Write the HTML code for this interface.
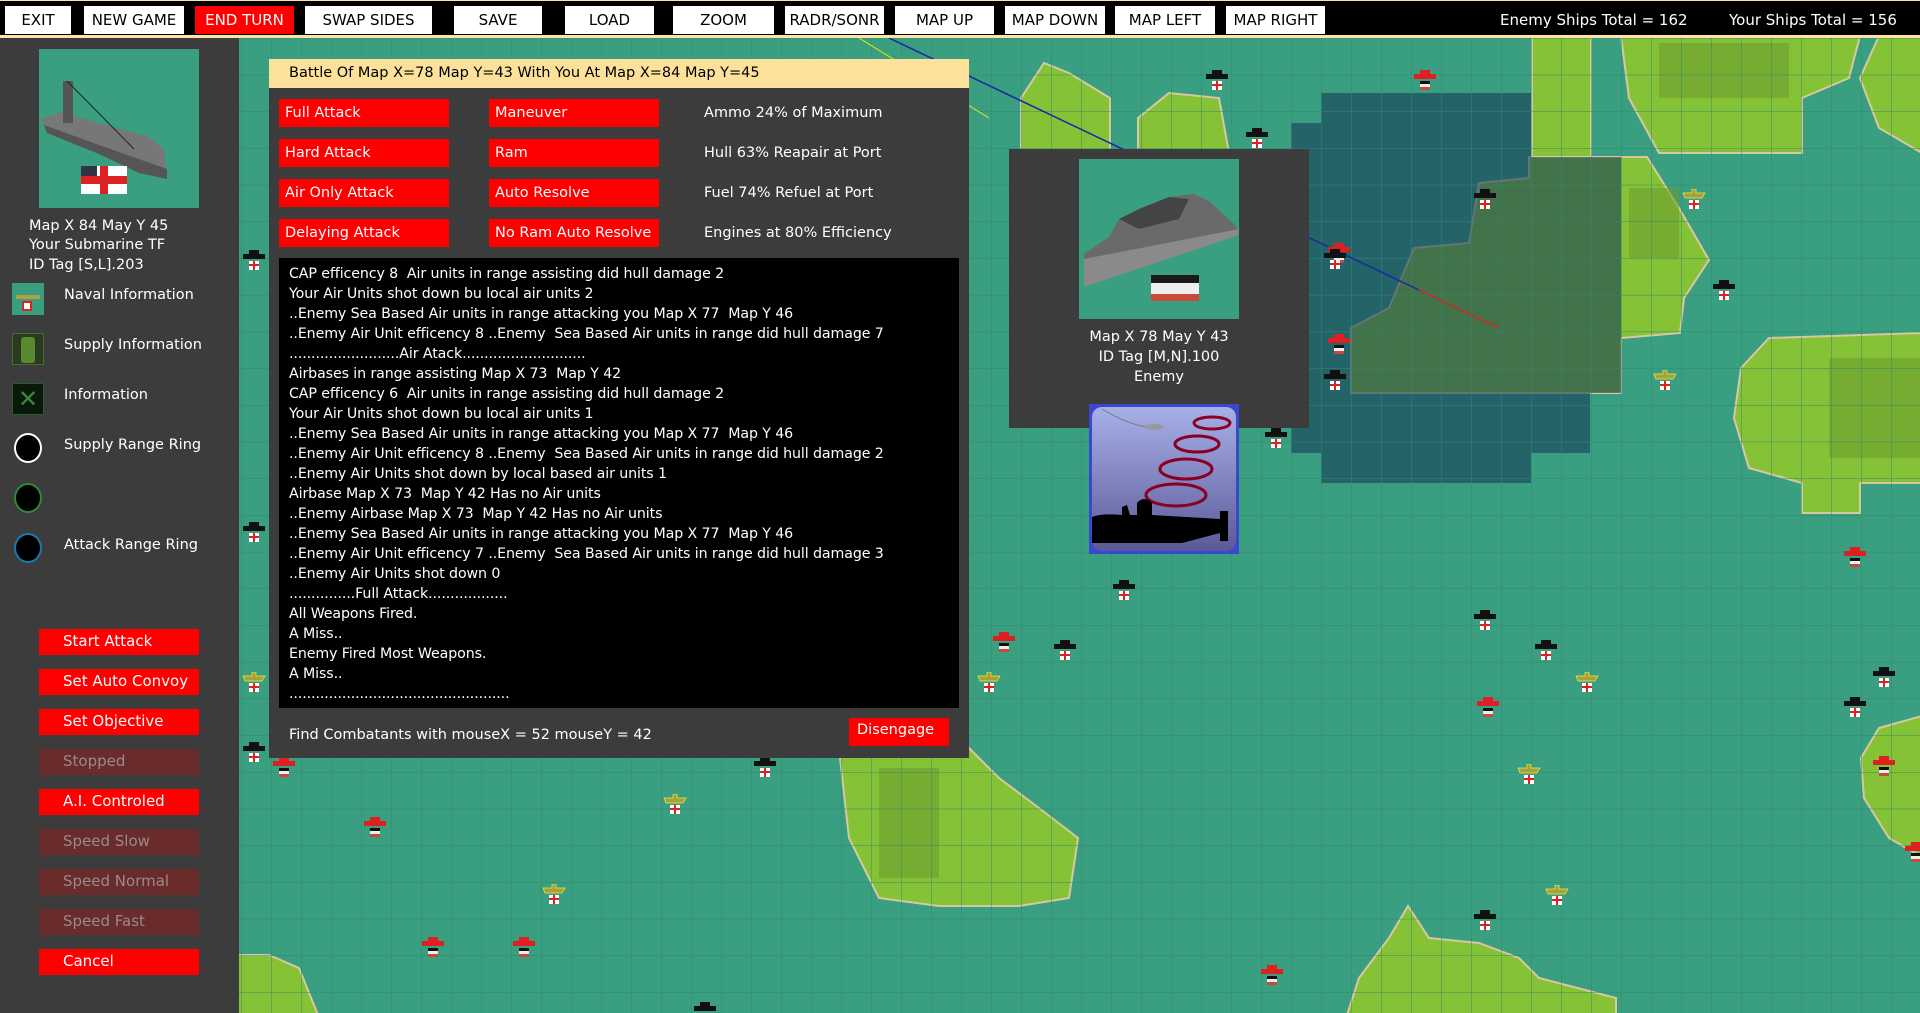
<!DOCTYPE html>
<html><head><meta charset="utf-8">
<style>
*{margin:0;padding:0;box-sizing:border-box}
body{width:1920px;height:1013px;overflow:hidden;position:relative;background:#3a9e80;font-family:"DejaVu Sans","Liberation Sans",sans-serif;color:#fff}
.a{position:absolute}
#top{left:0;top:0;width:1920px;height:38px;background:#000;border-bottom:3px solid #fde4a0;border-top:1px solid #fde4a0}
.tb{position:absolute;top:5px;height:28px;background:#fff;color:#000;font-size:15px;text-align:center;line-height:28px}
#left{left:0;top:38px;width:239px;height:975px;background:#3c3c3c}
.lt{position:absolute;font-size:14.5px;color:#fff}
.rb{position:absolute;left:39px;width:160px;height:26px;background:#f00;font-size:15px;line-height:24px;padding-left:24px}
.rb.d{background:#6a2b2b;color:#9a8a8a}
#dlg{left:269px;top:59px;width:700px;height:699px;background:#3c3c3c}
#hdr{left:0;top:0;width:700px;height:29px;background:#fde09a;color:#000;font-size:14.5px;line-height:29px;padding-left:20px}
.db{position:absolute;width:170px;height:28px;background:#f00;font-size:14.5px;line-height:28px;padding-left:6px}
.st{position:absolute;left:435px;font-size:14.5px;line-height:28px}
#log{left:10px;top:199px;width:680px;height:450px;background:#000;padding:6px 0 0 10px;font-size:14.2px;line-height:20px;white-space:pre;letter-spacing:-0.1px}
</style></head><body>
<svg class="a" style="left:239px;top:38px" width="1681" height="975">
<defs>
<pattern id="g" width="30" height="36.7" patternUnits="userSpaceOnUse" x="2" y="0"><path d="M0 0H30M0 0V36.7" stroke="#2f8a6e" stroke-width="1" fill="none"/></pattern>
<symbol id="sr" width="24" height="22"><rect x="7" y="0" width="10" height="4" fill="#e02020"/><rect x="1" y="4" width="22" height="5" fill="#e02020"/><rect x="7" y="11" width="10" height="3" fill="#111"/><rect x="7" y="14" width="10" height="3" fill="#eee"/><rect x="7" y="17" width="10" height="3" fill="#c84a3a"/></symbol>
<symbol id="sb" width="24" height="22"><rect x="7" y="0" width="10" height="4" fill="#111"/><rect x="1" y="4" width="22" height="5" fill="#111"/><rect x="7" y="11" width="10" height="9" fill="#fff"/><rect x="11" y="11" width="2" height="9" fill="#d22"/><rect x="7" y="14" width="10" height="2" fill="#d22"/></symbol>
<symbol id="sy" width="24" height="22"><path d="M10 0L14 0 14 4 23 4 20 9 3 9 1 4 10 4Z" fill="#a8a040" stroke="#ee3" stroke-width=".7"/><rect x="7" y="11" width="10" height="9" fill="#fff"/><rect x="11" y="11" width="2" height="9" fill="#d22"/><rect x="7" y="14" width="10" height="2" fill="#d22"/></symbol>
</defs>
<rect width="1681" height="975" fill="#3a9e80"/>
<!-- islands -->
<g fill="#86c236" stroke="#d8c8a0" stroke-width="2">
<path d="M1112 355L1112 290 1150 270 1175 210 1230 205 1240 145 1290 140 1290 119 1408 119 1440 170 1470 222 1445 260 1441 295 1382 300 1382 355Z"/>
<path d="M1293 -2H1352V119H1293Z"/>
<path d="M1382 -2L1621 -2 1610 40 1563 60 1563 115 1420 115 1390 60Z"/>
<path d="M1640 -2L1683 -2 1683 115 1640 90 1621 40Z"/>
<path d="M1502 330L1530 300 1683 295 1683 445 1621 445 1621 475 1563 475 1563 445 1510 430 1495 380Z"/>
<path d="M782 60L805 25 830 35 871 60 871 115 782 115Z"/>
<path d="M899 80L930 55 980 60 990 115 899 115Z"/>
<path d="M640 660L690 660 720 700 760 740 800 770 839 800 830 860 780 868 700 868 640 860 610 800 601 720Z"/>
<path d="M1108 977L1120 940 1150 900 1169 868 1190 900 1240 905 1280 920 1300 940 1377 960 1377 977Z"/>
<path d="M-2 917L30 917 60 930 79 977 -2 977Z"/>
<path d="M1640 690L1683 678 1683 819 1650 800 1625 760 1622 720Z"/>
</g>
<g fill="#6a9a30" opacity=".55">
<path d="M1420 5H1550V60H1420Z"/><path d="M1590 320H1681V420H1590Z"/><path d="M640 730H700V840H640Z"/><path d="M1390 150H1440V220H1390Z"/>
</g>
<!-- dark range overlay -->
<path d="M1082 55H1292V85H1292V119H1382V355H1351V415H1292V445H1082V415H1052V85H1082Z" fill="#153d58" opacity=".6"/>
<rect width="1681" height="975" fill="url(#g)"/>
<line x1="650" y1="0" x2="1180" y2="252" stroke="#1a2aa0" stroke-width="1.5"/>
<line x1="620" y1="0" x2="750" y2="80" stroke="#ee0" stroke-width="1"/>
<line x1="1180" y1="252" x2="1260" y2="290" stroke="#d22" stroke-width="1.5"/>
<g>
<use href="#sr" x="1174" y="32"/><use href="#sr" x="1008" y="299"/><use href="#sr" x="33" y="719"/><use href="#sr" x="124" y="779"/><use href="#sr" x="182" y="899"/><use href="#sr" x="273" y="899"/><use href="#sr" x="1021" y="927"/><use href="#sr" x="1237" y="659"/><use href="#sr" x="1604" y="509"/><use href="#sr" x="1633" y="718"/><use href="#sr" x="1665" y="804"/><use href="#sr" x="753" y="594"/><use href="#sr" x="1088" y="205"/><use href="#sr" x="1088" y="296"/>
<use href="#sb" x="966" y="32"/><use href="#sb" x="1234" y="151"/><use href="#sb" x="1084" y="211"/><use href="#sb" x="1084" y="332"/><use href="#sb" x="1025" y="390"/><use href="#sb" x="1473" y="242"/><use href="#sb" x="873" y="542"/><use href="#sb" x="1234" y="572"/><use href="#sb" x="1295" y="602"/><use href="#sb" x="814" y="602"/><use href="#sb" x="1604" y="659"/><use href="#sb" x="1633" y="629"/><use href="#sb" x="514" y="719"/><use href="#sb" x="454" y="964"/><use href="#sb" x="1234" y="872"/><use href="#sb" x="3" y="212"/><use href="#sb" x="3" y="484"/><use href="#sb" x="1006" y="90"/><use href="#sb" x="3" y="704"/>
<use href="#sy" x="1443" y="151"/><use href="#sy" x="1336" y="634"/><use href="#sy" x="1278" y="726"/><use href="#sy" x="1306" y="847"/><use href="#sy" x="1414" y="332"/><use href="#sy" x="424" y="756"/><use href="#sy" x="303" y="846"/><use href="#sy" x="3" y="634"/><use href="#sy" x="738" y="634"/>
</g>
</svg>

<div id="top" class="a">
<div class="tb" style="left:5px;width:66px">EXIT</div>
<div class="tb" style="left:84px;width:100px">NEW GAME</div>
<div class="tb" style="left:195px;width:99px;background:#f00;color:#fff">END TURN</div>
<div class="tb" style="left:305px;width:127px">SWAP SIDES</div>
<div class="tb" style="left:454px;width:88px">SAVE</div>
<div class="tb" style="left:565px;width:89px">LOAD</div>
<div class="tb" style="left:673px;width:101px">ZOOM</div>
<div class="tb" style="left:785px;width:99px">RADR/SONR</div>
<div class="tb" style="left:895px;width:99px">MAP UP</div>
<div class="tb" style="left:1005px;width:100px">MAP DOWN</div>
<div class="tb" style="left:1115px;width:100px">MAP LEFT</div>
<div class="tb" style="left:1226px;width:99px">MAP RIGHT</div>
<div class="a" style="left:1500px;top:5px;font-size:15px;line-height:28px">Enemy Ships Total = 162</div>
<div class="a" style="left:1729px;top:5px;font-size:15px;line-height:28px">Your Ships Total = 156</div>
</div>

<div id="left" class="a">
<div class="a" style="left:39px;top:11px;width:160px;height:159px;background:#3a9e80">
<svg width="160" height="159"><path d="M2 70L25 62 30 66 60 74 110 88 125 100 128 130 100 124 60 105 8 84Z" fill="#777"/><path d="M8 84L60 105 100 124 128 130 128 120 60 96 5 76Z" fill="#555"/><rect x="24" y="32" width="10" height="42" fill="#555"/><line x1="28" y1="32" x2="95" y2="100" stroke="#222"/><rect x="42" y="117" width="46" height="28" fill="#fff"/><rect x="61" y="117" width="8" height="28" fill="#d22"/><rect x="42" y="127" width="46" height="8" fill="#d22"/><rect x="42" y="117" width="16" height="10" fill="#334"/></svg>
</div>
<div class="lt" style="left:29px;top:180px">Map X 84  May Y 45</div>
<div class="lt" style="left:29px;top:199px">Your Submarine TF</div>
<div class="lt" style="left:29px;top:219px">ID Tag [S,L].203</div>
<div class="a" style="left:12px;top:245px;width:32px;height:32px;background:#3a9e80"><div class="a" style="left:4px;top:12px;width:24px;height:4px;background:#b0a040"></div><div class="a" style="left:10px;top:18px;width:10px;height:10px;background:#fff;border:2px solid #d22"></div></div>
<div class="lt" style="left:64px;top:249px">Naval Information</div>
<div class="a" style="left:12px;top:295px;width:32px;height:32px;background:#2a3a20;border:1px solid #4a6a30"><div class="a" style="left:8px;top:3px;width:14px;height:26px;background:#5a8a30;border-radius:3px"></div></div>
<div class="lt" style="left:64px;top:299px">Supply Information</div>
<div class="a" style="left:12px;top:345px;width:32px;height:32px;background:#0a1a0a;border:1px solid #2a5a2a;color:#3a8a3a;font-size:24px;line-height:30px;text-align:center">✕</div>
<div class="lt" style="left:64px;top:349px">Information</div>
<div class="a" style="left:14px;top:395px;width:28px;height:30px;border-radius:50%;background:#000;border:2px solid #fff"></div>
<div class="lt" style="left:64px;top:399px">Supply Range Ring</div>
<div class="a" style="left:14px;top:445px;width:28px;height:30px;border-radius:50%;background:#000;border:2px solid #2a8a3a"></div>
<div class="a" style="left:14px;top:495px;width:28px;height:30px;border-radius:50%;background:#000;border:2px solid #1a7ab0"></div>
<div class="lt" style="left:64px;top:499px">Attack Range Ring</div>
<div class="rb" style="top:591px">Start Attack</div>
<div class="rb" style="top:631px">Set Auto Convoy</div>
<div class="rb" style="top:671px">Set Objective</div>
<div class="rb d" style="top:711px">Stopped</div>
<div class="rb" style="top:751px">A.I. Controled</div>
<div class="rb d" style="top:791px">Speed Slow</div>
<div class="rb d" style="top:831px">Speed Normal</div>
<div class="rb d" style="top:871px">Speed Fast</div>
<div class="rb" style="top:911px">Cancel</div>
</div>

<div id="dlg" class="a">
<div id="hdr" class="a">Battle Of Map X=78  Map Y=43  With You At Map X=84  Map Y=45</div>
<div class="db" style="left:10px;top:40px">Full Attack</div>
<div class="db" style="left:220px;top:40px">Maneuver</div>
<div class="db" style="left:10px;top:80px">Hard Attack</div>
<div class="db" style="left:220px;top:80px">Ram</div>
<div class="db" style="left:10px;top:120px">Air Only Attack</div>
<div class="db" style="left:220px;top:120px">Auto Resolve</div>
<div class="db" style="left:10px;top:160px">Delaying Attack</div>
<div class="db" style="left:220px;top:160px">No Ram Auto Resolve</div>
<div class="st" style="top:40px">Ammo 24% of Maximum</div>
<div class="st" style="top:80px">Hull 63% Reapair at Port</div>
<div class="st" style="top:120px">Fuel 74% Refuel at Port</div>
<div class="st" style="top:160px">Engines at 80% Efficiency</div>
<div id="log" class="a">CAP efficency 8  Air units in range assisting did hull damage 2
Your Air Units shot down bu local air units 2
..Enemy Sea Based Air units in range attacking you Map X 77  Map Y 46
..Enemy Air Unit efficency 8 ..Enemy  Sea Based Air units in range did hull damage 7
.........................Air Atack............................
Airbases in range assisting Map X 73  Map Y 42
CAP efficency 6  Air units in range assisting did hull damage 2
Your Air Units shot down bu local air units 1
..Enemy Sea Based Air units in range attacking you Map X 77  Map Y 46
..Enemy Air Unit efficency 8 ..Enemy  Sea Based Air units in range did hull damage 2
..Enemy Air Units shot down by local based air units 1
Airbase Map X 73  Map Y 42 Has no Air units
..Enemy Airbase Map X 73  Map Y 42 Has no Air units
..Enemy Sea Based Air units in range attacking you Map X 77  Map Y 46
..Enemy Air Unit efficency 7 ..Enemy  Sea Based Air units in range did hull damage 3
..Enemy Air Units shot down 0
...............Full Attack..................
All Weapons Fired.
A Miss..
Enemy Fired Most Weapons.
A Miss..
..................................................</div>
<div class="a" style="left:20px;top:668px;font-size:14.5px">Find Combatants with mouseX = 52 mouseY = 42</div>
<div class="a" style="left:580px;top:659px;width:100px;height:28px;background:#f00;font-size:14.5px;line-height:24px;padding-left:8px">Disengage</div>
</div>

<div class="a" style="left:1009px;top:149px;width:300px;height:279px;background:#3c3c3c">
<div class="a" style="left:70px;top:10px;width:160px;height:160px;background:#3a9e80">
<svg width="160" height="160"><path d="M5 95L30 78 40 60 60 50 90 38 115 35 130 42 155 65 160 72 5 125Z" fill="#6a6a6a"/><path d="M40 60L60 50 90 38 110 40 100 60 60 70Z" fill="#444"/><path d="M5 100L160 70 160 76 5 128Z" fill="#8a8a8a"/><rect x="72" y="116" width="48" height="8" fill="#1a1a1a"/><rect x="72" y="124" width="48" height="11" fill="#eee"/><rect x="72" y="135" width="48" height="7" fill="#c84a3a"/></svg>
</div>
<div class="a" style="left:0;top:178px;width:300px;text-align:center;font-size:14.5px;line-height:20px">Map X 78  May Y 43<br>ID Tag [M,N].100<br>Enemy</div>
</div>
<div class="a" style="left:1089px;top:404px;width:150px;height:150px;background:#3a48d0;padding:3px">
<svg width="144" height="144" style="display:block"><defs><linearGradient id="s" x1="0" y1="0" x2="0" y2="1"><stop offset="0" stop-color="#a8b0e8"/><stop offset="1" stop-color="#5a5a98"/></linearGradient></defs><rect width="144" height="144" rx="10" fill="url(#s)"/><path d="M10 2Q40 20 60 20" stroke="#777" fill="none"/><ellipse cx="62" cy="20" rx="10" ry="3" fill="#999"/><g fill="none" stroke="#8a0020" stroke-width="3"><ellipse cx="120" cy="16" rx="18" ry="6"/><ellipse cx="105" cy="37" rx="22" ry="8"/><ellipse cx="94" cy="62" rx="26" ry="10"/><ellipse cx="84" cy="88" rx="30" ry="11"/></g><path d="M0 110Q10 106 30 108L30 100 35 98 38 108 45 108 45 96Q52 88 60 96L60 108 128 112 128 104 136 104 136 134 128 134 128 126 90 136 0 136Z" fill="#000"/></svg>
</div>
</body></html>
